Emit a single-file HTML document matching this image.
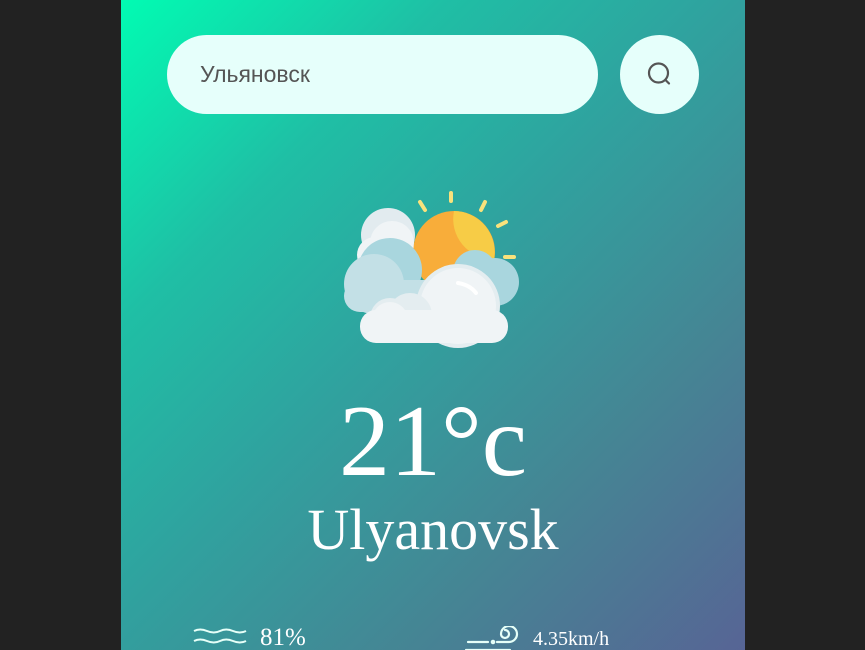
<!DOCTYPE html>
<html><head><meta charset="utf-8"><style>
html,body{margin:0;padding:0;width:865px;height:650px;overflow:hidden;background:#222;}
.wrap{position:relative;width:865px;height:650px;overflow:hidden;background:#222;}
.card{position:absolute;left:121px;top:-12px;width:624px;height:720px;border-radius:12px;
background:linear-gradient(135deg,#00feb3 0%,#1fbfa5 25%,#2fa39f 45%,#458594 70%,#5a5f95 100%);}
.search{position:absolute;left:46px;top:47px;width:431px;height:79px;border-radius:40px;background:#e6fffb;}
.search span{position:absolute;left:33px;top:26px;font:23px "Liberation Sans",sans-serif;color:#555;}
.btn{position:absolute;left:499px;top:47px;width:79px;height:79px;border-radius:50%;background:#e6fffb;}
.t{position:absolute;left:0;width:624px;text-align:center;color:#fff;font-family:"Liberation Serif",serif;}
.sm{position:absolute;color:#fff;font-family:"Liberation Serif",serif;}
</style></head><body><div class="wrap">
<div class="card">
<div class="search"><span>Ульяновск</span></div>
<div class="btn"><svg width="79" height="79" viewBox="0 0 79 79"><circle cx="38.5" cy="38" r="9.5" fill="none" stroke="#555" stroke-width="2.2"/><line x1="45.5" y1="45" x2="49" y2="48.5" stroke="#555" stroke-width="2.2" stroke-linecap="round"/></svg></div>
<svg style="position:absolute;left:209px;top:192px" width="200" height="180" viewBox="0 0 200 180">
<g stroke="#f9e27c" stroke-width="4" stroke-linecap="round">
<line x1="121" y1="13" x2="121" y2="21"/><line x1="90" y1="22" x2="95" y2="30"/><line x1="155" y1="22" x2="151" y2="30"/><line x1="168" y1="46" x2="176" y2="42"/><line x1="175" y1="77" x2="184" y2="77"/></g>
<circle cx="124" cy="72" r="41" fill="#f8ad3a"/>
<path d="M124 31a41 41 0 0 1 40 48a40 40 0 0 1 -40 -48z" fill="#f7cc46"/>
<circle cx="58" cy="55" r="27" fill="#e2ebef"/><circle cx="45" cy="75" r="18" fill="#f0f4f6"/>
<circle cx="62" cy="63" r="22" fill="#f0f4f6"/>
<circle cx="165" cy="102" r="24" fill="#a9d6de"/><circle cx="145" cy="92" r="22" fill="#a9d6de"/>
<circle cx="60" cy="90" r="32" fill="#a9d6de"/><circle cx="44" cy="104" r="30" fill="#c3e0e6"/>
<rect x="14" y="100" width="150" height="32" rx="16" fill="#c3e0e6"/>
<circle cx="128" cy="126" r="42" fill="#e4edf0"/><circle cx="128" cy="126" r="38" fill="#f0f4f6"/>
<circle cx="60" cy="138" r="20" fill="#e4edf0"/><circle cx="80" cy="135" r="22" fill="#e4edf0"/>
<circle cx="60" cy="140" r="18" fill="#f0f4f6"/>
<rect x="30" y="130" width="148" height="33" rx="16" fill="#f0f4f6"/>
<path d="M128 103q12 2 18 10" stroke="#fff" stroke-width="4" fill="none" stroke-linecap="round"/>
</svg>
<div class="t" style="top:398px;font-size:102px;line-height:112px">21°c</div>
<div class="t" style="top:509px;font-size:58px;line-height:66px">Ulyanovsk</div>
<svg style="position:absolute;left:72px;top:640px" width="56" height="30"><g stroke="#e6fff8" stroke-width="2" fill="none"><path d="M1 3q6 -3 13 0t13 0t13 0t13 0"/><path d="M1 13q6 -3 13 0t13 0t13 0t13 0"/></g></svg>
<div class="sm" style="left:139px;top:636px;font-size:25px;line-height:28px">81%</div>
<svg style="position:absolute;left:344px;top:638px" width="56" height="30"><g stroke="#e6fff8" stroke-width="2.2" fill="none" stroke-linecap="round"><path d="M3 16h20"/><circle cx="28" cy="16" r="1.2"/><path d="M32 16h12a8 8 0 1 0 -8 -8a4 4 0 1 0 4 -4"/><path d="M1 24h44"/></g></svg>
<div class="sm" style="left:412px;top:639px;font-size:20px;line-height:24px">4.35km/h</div>
</div>
</div></body></html>
